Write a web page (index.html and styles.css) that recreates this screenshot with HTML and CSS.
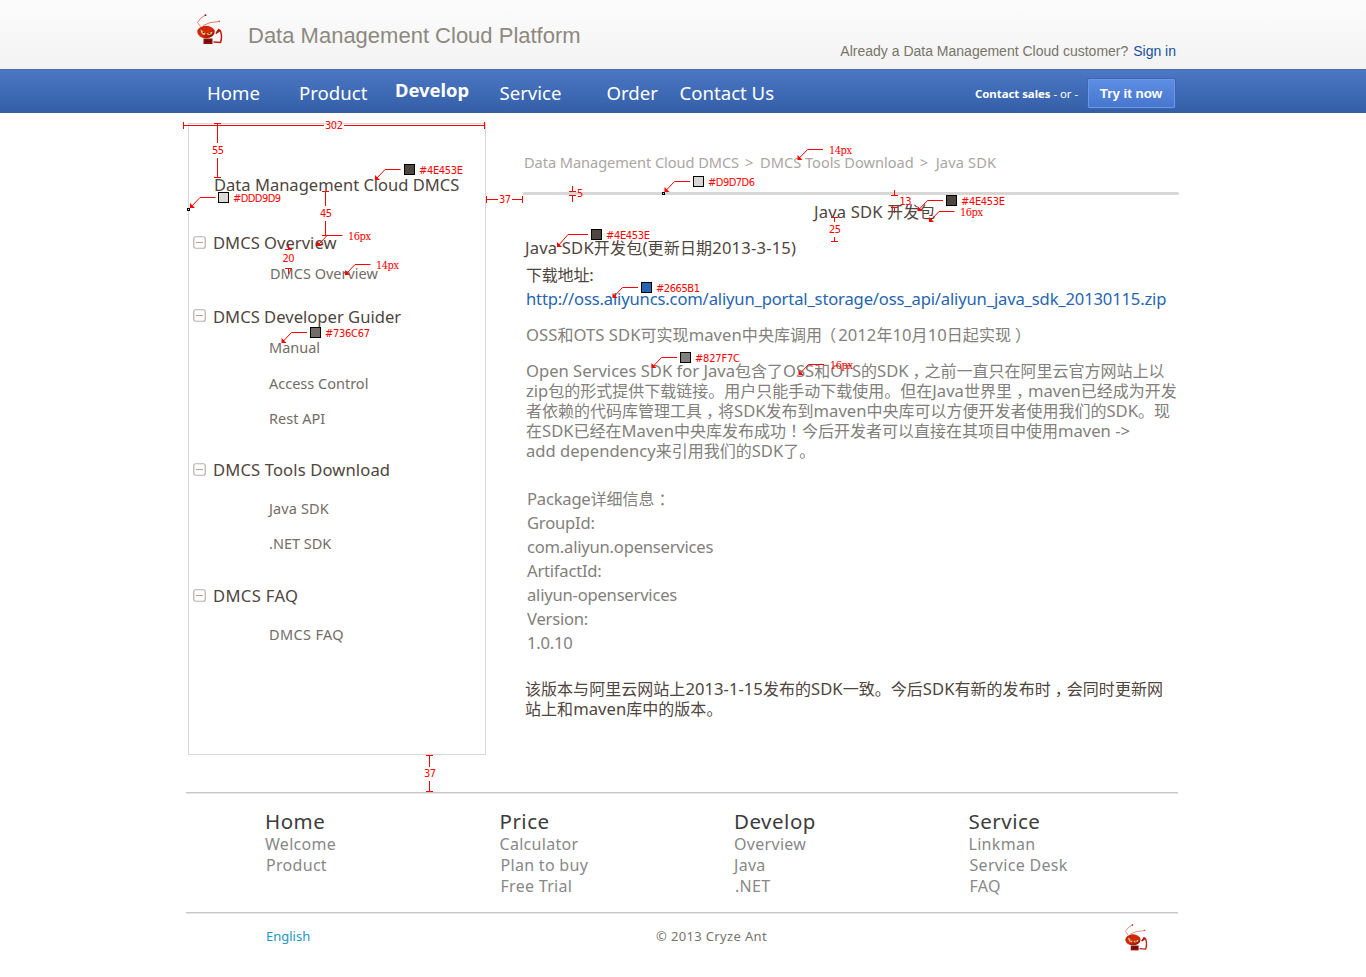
FILE: index.html
```html
<!DOCTYPE html>
<html lang="zh-CN">
<head>
<meta charset="utf-8">
<title>Data Management Cloud Platform</title>
<link rel="stylesheet" href="styles.css">
</head>
<body>
<svg class="defs" width="0" height="0">
  <defs>
    <linearGradient id="shell" x1="0" y1="0" x2="1" y2="1"><stop offset="0" stop-color="#b3240f"/><stop offset=".5" stop-color="#dc2a08"/><stop offset="1" stop-color="#7c0d05"/></linearGradient>
    <symbol id="ant" viewBox="0 0 27 33">
      <path d="M4.500 12.500 1.500 8.500Q4 3.500 9.500 1M7 11.500Q13 7.800 23 7.500" fill="none" stroke="#d9735a" stroke-width=".9"/>
      <circle cx="9.500" cy="1.200" r=".9" fill="#7c201a"/><circle cx="23.300" cy="7.300" r=".9" fill="#c9604b"/>
      <path d="M20 19.500 22.500 16 24.500 17Q26.500 23 24.500 28.500L17.500 28" fill="none" stroke="#c51d12" stroke-width="1.500"/>
      <path d="m19.500 20 3-5.500 2.500 2-2.500 2z" fill="#b8140b"/>
      <ellipse cx="10" cy="18" rx="8.700" ry="6.200" fill="url(#shell)"/>
      <path d="m4.500 15.500 5 3.500-1 2Q5 20.500 4.500 15.500zM10.500 19.500l6-1.800q-.5 3.300-4.500 3.300z" fill="#f3cd87"/>
      <path d="m6.500 18 2 .8M12.500 19.600l2-.5" stroke="#3b0b04"/>
      <path d="M7.500 24.500h9v5.500h-9z" fill="#8d1008"/><path d="M9 27h6" stroke="#40100a"/>
    </symbol>
    <symbol id="minus" viewBox="0 0 13 13"><rect x=".75" y=".75" width="11.500" height="11.500" rx="2" fill="#fff" stroke="#b5b0ad" stroke-width="1.200"/><path d="M3 6.500h7" stroke="#a7a29f"/></symbol>
    <g id="pointer"><path d="M25.500-10.500H10L1-1" fill="none" stroke="#f00"/><path d="M0 0V-5L5 0z" fill="#f00"/></g>
  </defs>
</svg>

<header class="top">
  <div class="wrap top-row">
    <svg class="logo" width="27" height="33"><use href="#ant"/></svg>
    <h1>Data Management Cloud Platform</h1>
    <p class="signin">Already a Data Management Cloud customer? <a>Sign in</a></p>
  </div>
</header>
<nav class="nav">
  <div class="wrap nav-row">
    <a class="n-home">Home</a><a class="n-product">Product</a><a class="n-develop">Develop</a><a class="n-service">Service</a><a class="n-order">Order</a><a class="n-contact">Contact Us</a>
    <p class="sales"><b>Contact sales</b> - or -</p>
    <button class="try">Try it now</button>
  </div>
</nav>

<main class="wrap main">
  <aside class="side">
    <h2>Data Management Cloud DMCS</h2>
    <h3 class="s-overview"><svg width="13" height="13"><use href="#minus"/></svg>DMCS Overview</h3>
    <ul class="tight"><li class="shift">DMCS Overview</li></ul>
    <h3 class="s-guide"><svg width="13" height="13"><use href="#minus"/></svg>DMCS Developer Guider</h3>
    <ul class="tight"><li>Manual</li><li class="mid">Access Control</li><li>Rest API</li></ul>
    <h3 class="s-tools"><svg width="13" height="13"><use href="#minus"/></svg>DMCS Tools Download</h3>
    <ul><li class="wide">Java SDK</li><li>.NET SDK</li></ul>
    <h3 class="s-faq"><svg width="13" height="13"><use href="#minus"/></svg>DMCS FAQ</h3>
    <ul><li class="wider">DMCS FAQ</li></ul>
  </aside>
  <article class="content">
    <div class="crumbs"><span class="first">Data Management Cloud DMCS</span><i>&gt;</i><span>DMCS Tools Download</span><i>&gt;</i><span class="last">Java SDK</span></div>
    <div class="rule"></div>
    <h2 class="doc-title"><span class="en">Java SDK </span>开发包</h2>
    <p class="dated"><span class="en">Java SDK</span>开发包<span class="en">(</span>更新日期<span class="en">2013-3-15)</span></p>
    <p class="addr">下载地址<span class="en">:</span></p>
    <p class="link"><a>http://oss.aliyuncs.com/aliyun_portal_storage/oss_api/aliyun_java_sdk_20130115.zip</a></p>
    <p class="maven"><span class="en">OSS</span>和<span class="en">OTS SDK</span>可实现<span class="en">maven</span>中央库调用<span class="open">（</span><span class="en">2012</span>年<span class="en">10</span>月<span class="en">10</span>日起实现<span class="mark">）</span></p>
    <p class="body"><span class="en">Open Services SDK for Java</span>包含了<span class="en">OSS</span>和<span class="en">OTS</span>的<span class="en">SDK</span><span class="mark">，</span>之前一直只在阿里云官方网站上以<br><span class="en">zip</span>包的形式提供下载链接。用户只能手动下载使用。但在<span class="en">Java</span>世界里<span class="mark">，</span><span class="en">maven</span>已经成为开发<br>者依赖的代码库管理工具<span class="mark">，</span>将<span class="en">SDK</span>发布到<span class="en">maven</span>中央库可以方便开发者使用我们的<span class="en">SDK</span>。现<br>在<span class="en">SDK</span>已经在<span class="en">Maven</span>中央库发布成功<span class="mark">！</span>今后开发者可以直接在其项目中使用<span class="en">maven -&gt;</span><br><span class="en">add dependency</span>来引用我们的<span class="en">SDK</span>了。</p>
    <p class="package"><span class="en">Package</span>详细信息<span class="mark">：</span><br><span class="en">GroupId:<br>com.aliyun.openservices<br>ArtifactId:<br>aliyun-openservices<br>Version:<br>1.0.10</span></p>
    <p class="note">该版本与阿里云网站上<span class="en">2013-1-15</span>发布的<span class="en">SDK</span>一致。今后<span class="en">SDK</span>有新的发布时<span class="mark">，</span>会同时更新网<br>站上和<span class="en">maven</span>库中的版本。</p>
  </article>
</main>

<footer class="foot">
  <div class="cols">
    <section><h4>Home</h4><p>Welcome</p><p class="in">Product</p></section>
    <section><h4>Price</h4><p>Calculator</p><p class="in">Plan to buy</p><p class="in">Free Trial</p></section>
    <section><h4>Develop</h4><p>Overview</p><p>Java</p><p class="in">.NET</p></section>
    <section><h4>Service</h4><p>Linkman</p><p class="in">Service Desk</p><p class="in">FAQ</p></section>
  </div>
  <div class="legal"><a>English</a><span>© 2013 Cryze Ant</span><svg width="24" height="29"><use href="#ant"/></svg></div>
</footer>

<svg class="notes" width="1366" height="977" viewBox="0 0 1366 977">
  <g class="dim">
    <path d="M183.500 122v7M484.500 122v7M183 125.500h141M344 125.500h141"/>
    <path d="M214 123.500h7M214 177.500h7M217.500 124v19M217.500 158v19"/>
    <path d="M322 191.500h7M325.500 192v14M325.500 221v14M322 235.500h20"/>
    <path d="M285 249.500h7M288.500 244v5M285 268.500h7M288.500 269v5"/>
    <path d="M486.500 196v7M522.500 196v7M487 199.500h11M512 199.500h11"/>
    <path d="M569 191.500h7M572.500 186v5M569 195.500h7M572.500 196v6"/>
    <path d="M891 195.500h7M894.500 190v5M891 207.500h7M894.500 208v5"/>
    <path d="M831 217.500h7M834.500 218v4M834.500 237v4M831 241.500h7"/>
    <path d="M426 755.500h7M429.500 756v11M429.500 781v11M426 791.500h7"/>
  </g>
  <g class="num">
    <text x="325" y="129" textLength="18">302</text><text x="212" y="154" textLength="12">55</text><text x="320" y="217" textLength="12">45</text>
    <text x="282.500" y="262" textLength="12">20</text><text x="499" y="203" textLength="12">37</text><text x="577" y="197">5</text>
    <text x="899.500" y="205" textLength="12">13</text><text x="829" y="233" textLength="12">25</text><text x="424" y="777" textLength="12">37</text>
    <text x="419" y="174" textLength="44">#4E453E</text><text x="233" y="202" textLength="48">#DDD9D9</text><text x="325" y="337" textLength="45">#736C67</text>
    <text x="708" y="186" textLength="47">#D9D7D6</text><text x="961" y="205" textLength="44">#4E453E</text><text x="606" y="239" textLength="44">#4E453E</text>
    <text x="656" y="292" textLength="44">#2665B1</text><text x="695" y="362" textLength="45">#827F7C</text>
  </g>
  <g class="px">
    <text x="348" y="240" textLength="23">16px</text><text x="376" y="269" textLength="23">14px</text><text x="829" y="154" textLength="23">14px</text>
    <text x="960" y="216" textLength="23">16px</text><text x="830" y="369" textLength="23">16px</text>
  </g>
  <use href="#pointer" x="375" y="180"/><use href="#pointer" x="190" y="208"/><use href="#pointer" x="317" y="246"/>
  <use href="#pointer" x="345" y="275"/><use href="#pointer" x="281.500" y="343"/><use href="#pointer" x="797.500" y="160"/>
  <use href="#pointer" x="664.500" y="192"/><use href="#pointer" x="917.500" y="211"/><use href="#pointer" x="929" y="222"/>
  <path d="M588 234.500H568L558 246" fill="none" stroke="#f00"/><path d="M557 247v-5l5 5z" fill="#f00"/>
  <use href="#pointer" x="612.500" y="298"/><use href="#pointer" x="651.500" y="368"/><use href="#pointer" x="798.500" y="375"/>
  <g stroke="#000">
    <rect x="404.500" y="164.500" width="10" height="10" fill="#4e453e"/><rect x="218.500" y="192.500" width="10" height="10" fill="#ddd9d9"/>
    <rect x="310.500" y="327.500" width="10" height="10" fill="#736c67"/><rect x="693.500" y="176.500" width="10" height="10" fill="#d9d7d6"/>
    <rect x="946.500" y="195.500" width="10" height="10" fill="#4e453e"/><rect x="591.500" y="229.500" width="10" height="10" fill="#4e453e"/>
    <rect x="641.500" y="282.500" width="10" height="10" fill="#2665b1"/><rect x="680.500" y="352.500" width="10" height="10" fill="#827f7c"/>
    <rect x="187.500" y="208.500" width="2" height="2" fill="#ddd"/><rect x="662.500" y="192.500" width="2" height="2" fill="#ddd"/>
  </g>
</svg>
</body>
</html>
```
FILE: styles.css
```css
* { box-sizing: border-box; }
body { margin: 0; height: 977px; position: relative; overflow: hidden; background: #fff; font-family: "Noto Sans", "Noto Sans CJK SC", sans-serif; color: #4e453e; font-size: 16px; }
h1, h2, h3, h4, p, ul { margin: 0; padding: 0; font-weight: 400; list-style: none; white-space: nowrap; }
.defs { position: absolute; }
.wrap { width: 992px; margin-left: 188px; }

.top { height: 69px; background: linear-gradient(#fcfcfc, #f3f3f3); }
.top-row { display: flex; font-family: "Liberation Sans", Arial, sans-serif; }
.logo { margin: 14px 0 0 8px; }
.top h1 { margin: 23px 0 0 25px; font-size: 22px; line-height: 26px; color: #8c897f; }
.signin { margin: 42px 4px 0 auto; font-size: 14px; line-height: 18px; color: #77746a; }
.signin a { color: #1550a0; margin-left: 1px; }

.nav { height: 44px; background: linear-gradient(#4b77c3, #345fa8); border-top: 1px solid #4a6ba6; border-bottom: 1px solid #3a5d98; }
.nav-row { display: flex; color: #fff; font-size: 18.600px; line-height: 26px; white-space: nowrap; }
.nav-row a { margin-top: 10px; }
.n-home { width: 92px; margin-left: 19px; }
.n-product { width: 96px; }
.nav-row .n-develop { width: 104.500px; font-weight: 700; margin-top: 7px; font-size: 18.400px; }
.n-service { width: 107px; }
.n-order { width: 73px; }
.n-contact { width: 295.500px; }
.sales { margin-top: 15px; width: 112px; font-size: 11.400px; letter-spacing: -.03px; line-height: 18px; }
.try { margin: 8px 0 0; width: 89px; height: 31px; padding: 0 1px 0 0; border: 1px solid #3b66b4; border-radius: 2px; background: linear-gradient(#5f8fe4, #4575cd); box-shadow: inset 0 0 0 1px #6d97e3; color: #fff; font: 700 13.400px "Liberation Sans", Arial, sans-serif; }

.main { display: flex; margin-top: 10px; height: 632px; }
.side { width: 298px; border: 1px solid #d9d7d7; padding-top: 51px; }
.side h2 { margin-left: 25px; font-size: 16.550px; line-height: 20px; }
.side h3 { display: flex; align-items: center; gap: 7px; margin-left: 4px; font-size: 16.600px; line-height: 20px; height: 20px; }
.side h3 svg { margin-top: -2px; }
.side .s-overview { margin-top: 38px; }
.side .s-guide { margin-top: 24px; }
.side .s-guide svg { margin-top: -3px; }
.side .s-tools { margin-top: 32px; letter-spacing: .13px; }
.side .s-faq { margin-top: 33px; letter-spacing: .35px; }
.side ul { margin: 18px 0 0 80px; font-size: 14.500px; line-height: 20px; color: #736c67; }
.side ul.tight { margin-top: 10px; }
.side li + li { margin-top: 15px; }
.side li.mid { margin-top: 16px; }
.side li.shift { margin-left: 1px; }
.side li.wide { letter-spacing: .13px; }
.side li.wider { letter-spacing: .35px; }

.content { width: 656px; margin-left: 37px; padding-top: 29px; color: #827f7c; }
.content p, .content h2 { font-size: 16px; line-height: 20px; margin-left: 3px; }
.en { font-size: 16.600px; line-height: 0; }
.mark { padding-left: 4px; margin-right: -4px; }
.open { margin: 0 2px 0 -2px; }
.crumbs { display: flex; margin-left: 1px; font-size: 14.600px; line-height: 20px; color: #aaa6a3; white-space: nowrap; }
.crumbs i { font-style: normal; width: 21px; padding-left: 6px; }
.crumbs .first { letter-spacing: -.06px; }
.crumbs .last { letter-spacing: .15px; margin-left: 1px; }
.rule { height: 3px; margin-top: 20px; border-radius: 2px; background: #d9d7d6; }
.content .doc-title { margin: 7px 0 0 291px; color: #4e453e; letter-spacing: .15px; }
.content .dated { margin: 16px 0 0 2px; color: #4e453e; letter-spacing: .18px; }
.content .addr { margin-top: 7px; color: #4e453e; letter-spacing: -.2px; }
.content .link { margin-top: 4px; font-size: 16.600px; letter-spacing: -.162px; color: #2665b1; }
.content .maven { margin-top: 16px; letter-spacing: .06px; }
.content .body { margin-top: 16px; }
.content .package { margin: 26px 0 0 4px; line-height: 24px; }
.package .en { letter-spacing: -.22px; }
.content .note { margin: 24px 0 0 2px; color: #4e453e; letter-spacing: .04px; }

.foot { width: 992px; margin: 37px 0 0 186px; border-top: 1px solid #c8c8c8; box-shadow: inset 0 1px #e6e6e6; }
.cols { height: 120px; padding: 15px 0 0 79px; display: grid; grid-template-columns: repeat(4, 234.500px); border-bottom: 1px solid #c8c8c8; box-shadow: 0 1px #e6e6e6; }
.cols h4 { font-size: 20.500px; line-height: 26px; color: #3c3c3c; letter-spacing: .5px; }
.cols p { font-size: 16px; line-height: 21px; color: #888; letter-spacing: .3px; }
.cols p.in { margin-left: 1px; }
.legal { display: flex; padding-top: 13px; font-size: 13px; line-height: 20px; color: #77736c; white-space: nowrap; }
.legal a { margin-left: 80px; width: 390px; color: #1e96bf; }
.legal span { width: 468px; letter-spacing: .35px; }
.legal svg { margin-top: -2px; }

.notes { position: absolute; left: 0; top: 0; pointer-events: none; }
.dim { stroke: #f00; fill: none; shape-rendering: crispEdges; }
.num { font: 11px "DejaVu Sans Condensed", "DejaVu Sans", sans-serif; font-stretch: condensed; fill: #f00; }
.px { font: 11px "DejaVu Serif", serif; font-stretch: condensed; fill: #f00; }
```
